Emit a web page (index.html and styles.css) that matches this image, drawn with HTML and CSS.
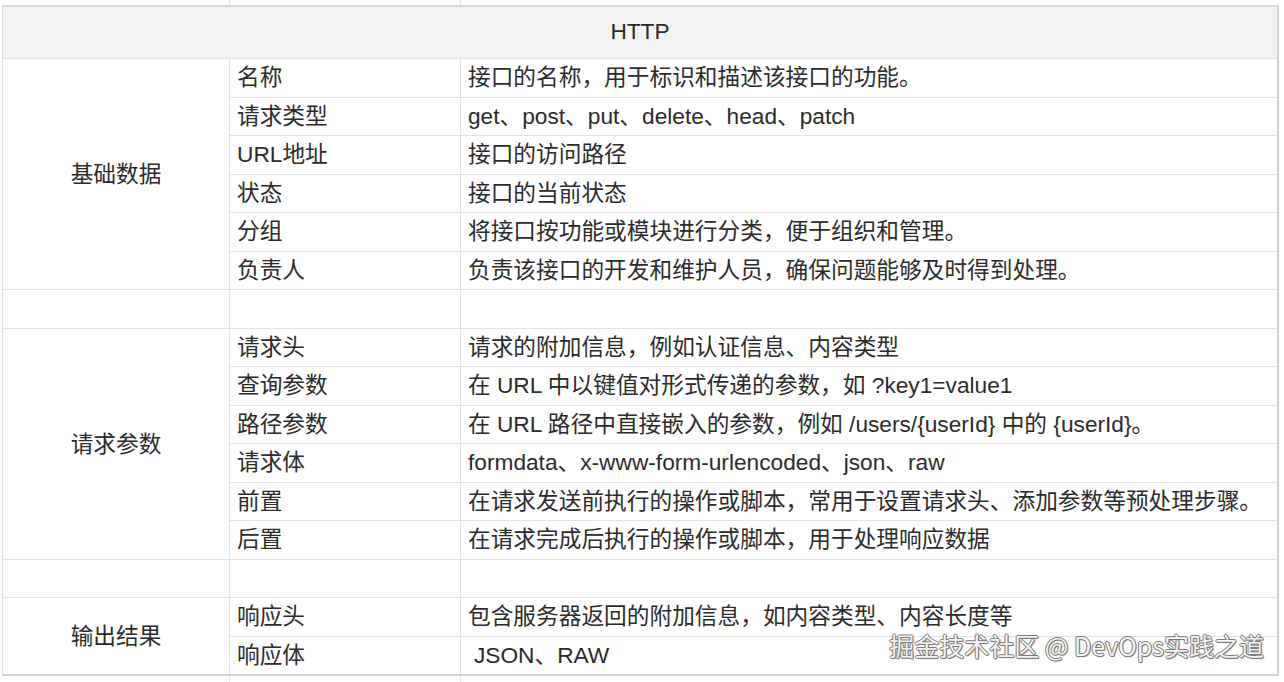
FILE: index.html
```html
<!DOCTYPE html>
<html lang="zh-CN">
<head>
<meta charset="utf-8">
<title>HTTP</title>
<link rel="stylesheet" href="styles.css">
</head>
<body>
<div class="page">
  <div class="strip strip-top"><div></div><div></div><div></div></div>
  <div class="sheet">
    <div class="cell head">HTTP</div>

    <div class="cell cat span6">基础数据</div>
    <div class="cell key">名称</div><div class="cell val">接口的名称，用于标识和描述该接口的功能。</div>
    <div class="cell key">请求类型</div><div class="cell val">get、post、put、delete、head、patch</div>
    <div class="cell key">URL地址</div><div class="cell val">接口的访问路径</div>
    <div class="cell key">状态</div><div class="cell val">接口的当前状态</div>
    <div class="cell key">分组</div><div class="cell val">将接口按功能或模块进行分类，便于组织和管理。</div>
    <div class="cell key">负责人</div><div class="cell val">负责该接口的开发和维护人员，确保问题能够及时得到处理。</div>

    <div class="cell"></div><div class="cell"></div><div class="cell"></div>

    <div class="cell cat span6">请求参数</div>
    <div class="cell key">请求头</div><div class="cell val">请求的附加信息，例如认证信息、内容类型</div>
    <div class="cell key">查询参数</div><div class="cell val">在 URL 中以键值对形式传递的参数，如 ?key1=value1</div>
    <div class="cell key">路径参数</div><div class="cell val">在 URL 路径中直接嵌入的参数，例如 /users/{userId} 中的 {userId}。</div>
    <div class="cell key">请求体</div><div class="cell val">formdata、x-www-form-urlencoded、json、raw</div>
    <div class="cell key">前置</div><div class="cell val">在请求发送前执行的操作或脚本，常用于设置请求头、添加参数等预处理步骤。</div>
    <div class="cell key">后置</div><div class="cell val">在请求完成后执行的操作或脚本，用于处理响应数据</div>

    <div class="cell"></div><div class="cell"></div><div class="cell"></div>

    <div class="cell cat span2">输出结果</div>
    <div class="cell key">响应头</div><div class="cell val">包含服务器返回的附加信息，如内容类型、内容长度等</div>
    <div class="cell key">响应体</div><div class="cell val val-indent">JSON、RAW</div>
  </div>
  <div class="strip strip-bottom"><div></div><div></div><div></div></div>
  <div class="watermark">掘金技术社区 @ DevOps实践之道</div>
</div>
</body>
</html>
```

FILE: styles.css
```css
html, body {
  margin: 0;
  padding: 0;
  background: #ffffff;
}

body {
  font-family: "Liberation Sans", "Noto Sans CJK SC", sans-serif;
  font-size: 22.7px;
  color: #2b2b2b;
  width: 1284px;
  height: 682px;
  overflow: hidden;
}

.page {
  position: relative;
  width: 1284px;
  height: 682px;
}

.strip {
  display: grid;
  grid-template-columns: 226px 230px 816px;
  column-gap: 1px;
  background: #e6e6e6;
  width: 1274px;
  margin-left: 3px;
}

.strip div {
  background: #ffffff;
}

.strip-top {
  height: 5px;
}

.strip-bottom {
  height: 6px;
}

.sheet {
  display: grid;
  grid-template-columns: 226px 230px 816px;
  grid-template-rows: 51px repeat(8, 38px 37px);
  gap: 1px;
  background: #e3e3e3;
  width: 1274px;
  margin-left: 2px;
  border-left: 1px solid #e0e0e0;
  border-top: 2px solid #d7d7d7;
  border-right: 2px solid #d2d2d2;
  border-bottom: 2px solid #d2d2d2;
}

.cell {
  background: #ffffff;
  display: flex;
  align-items: center;
  white-space: nowrap;
  overflow: hidden;
  padding-bottom: 5px;
  box-sizing: border-box;
}

.head {
  grid-column: 1 / 4;
  background: #f2f2f2;
  justify-content: center;
  padding-bottom: 2px;
}

.cat {
  justify-content: center;
  padding-bottom: 4px;
}

.span6 {
  grid-row: span 6;
}

.span2 {
  grid-row: span 2;
}

.key {
  padding-left: 7px;
}

.val {
  padding-left: 7px;
}

.val-indent {
  padding-left: 13px;
}

.watermark {
  position: absolute;
  right: 20px;
  top: 628px;
  font-family: "Noto Sans CJK SC", "Liberation Sans", sans-serif;
  font-size: 25px;
  line-height: 34px;
  color: #f4f4f4;
  text-shadow:
    1px 0 0 #7a7a7a,
    -1px 0 0 #7a7a7a,
    0 1px 0 #7a7a7a,
    0 -1px 0 #7a7a7a,
    1px 1px 1px #6a6a6a;
  white-space: nowrap;
}
```
